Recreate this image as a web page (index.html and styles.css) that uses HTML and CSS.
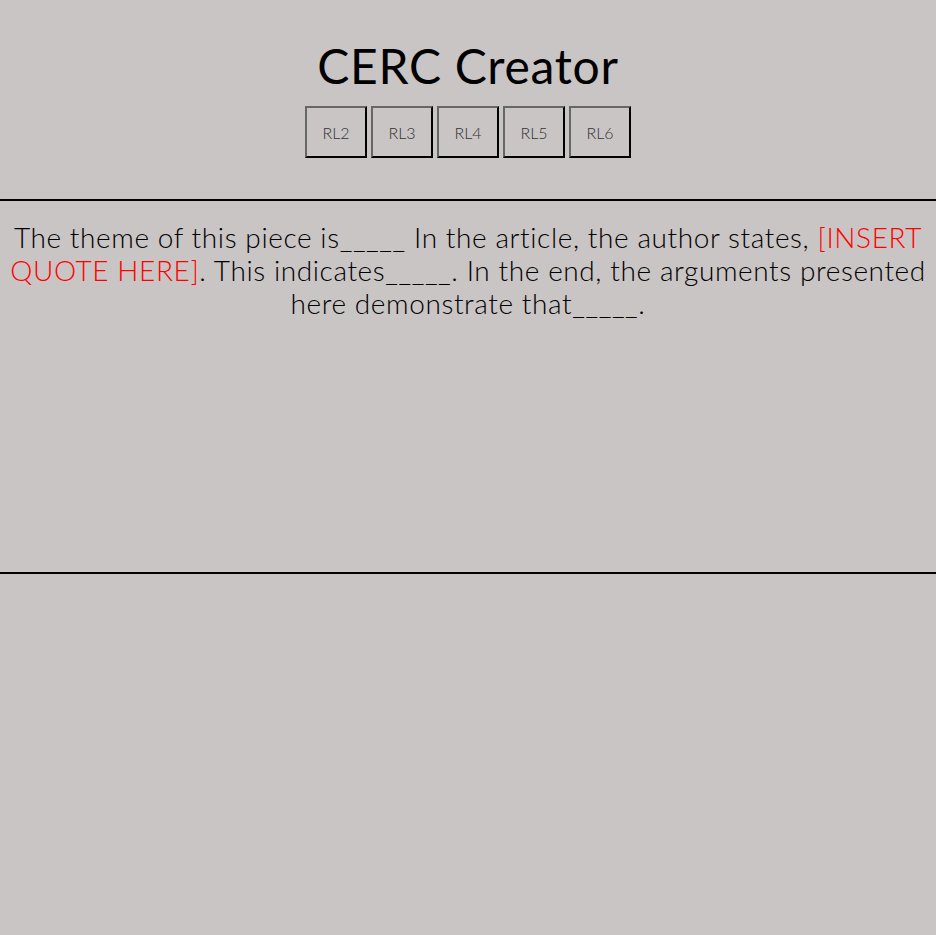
FILE: index.html
```html
<!DOCTYPE html>
<html lang="en">
<head>
<meta charset="utf-8">
<title>CERC Creator</title>
<link rel="stylesheet" href="styles.css">
</head>
<body>
<header class="header">
  <h1 class="title">CERC Creator</h1>
  <nav class="levels">
    <button class="level">RL2</button>
    <button class="level">RL3</button>
    <button class="level">RL4</button>
    <button class="level">RL5</button>
    <button class="level">RL6</button>
  </nav>
</header>
<main class="output">
  <p class="cerc">The theme of this piece is_____ In the article, the author states, <span class="quote">[INSERT QUOTE HERE]</span>. This indicates_____. In the end, the arguments presented here demonstrate that_____.</p>
</main>
</body>
</html>
```
FILE: styles.css
```css
html, body {
  margin: 0;
  padding: 0;
  background: #c9c5c4;
  color: #000;
  font-family: Lato, "Liberation Sans", sans-serif;
}
.header {
  padding: 38px 0 41px;
  border-bottom: 2px solid #000;
  text-align: center;
}
.title {
  margin: 0;
  font-size: 48px;
  line-height: 56px;
  font-weight: 400;
  letter-spacing: 0.7px;
}
.levels {
  margin-top: 12px;
  display: flex;
  justify-content: center;
  gap: 4px;
}
.level {
  min-width: 62px;
  height: 52px;
  box-sizing: border-box;
  padding: 0 10px;
  background: #c9c5c4;
  border: 2px solid;
  border-color: #666 #000 #000 #666;
  font-family: Lato, "Liberation Sans", sans-serif;
  font-size: 16px;
  font-weight: 300;
  color: #333;
}
.output {
  height: 373px;
  box-sizing: border-box;
  border-bottom: 2px solid #000;
  padding: 20px 0 0;
}
.cerc {
  margin: 0;
  text-align: center;
  font-size: 28px;
  line-height: 33px;
  font-weight: 300;
  letter-spacing: 0.6px;
}
.quote {
  color: #ff0000;
}
```
